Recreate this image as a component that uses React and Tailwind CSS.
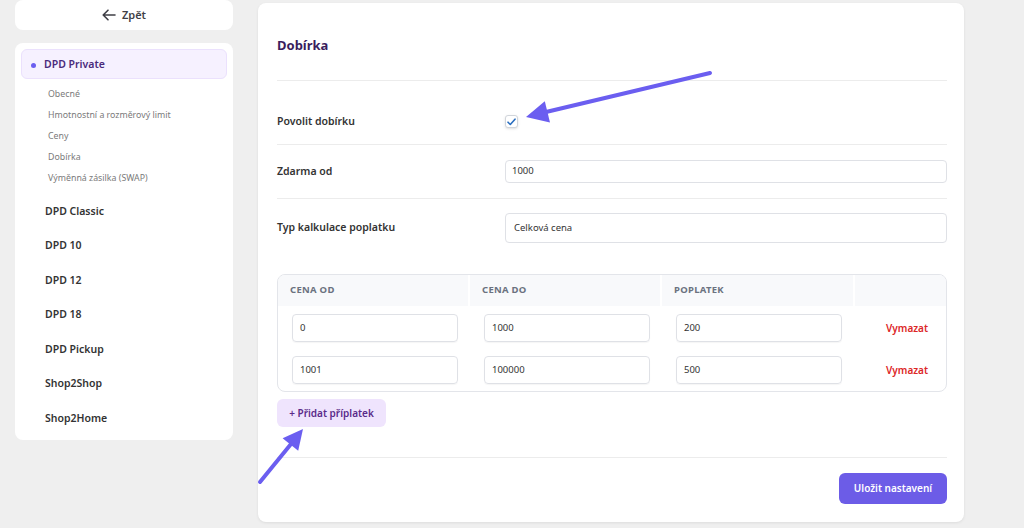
import React from "react";

const subItems = ["Obecné", "Hmotnostní a rozměrový limit", "Ceny", "Dobírka", "Výměnná zásilka (SWAP)"];
const carriers = ["DPD Classic", "DPD 10", "DPD 12", "DPD 18", "DPD Pickup", "Shop2Shop", "Shop2Home"];
const rows = [
  ["0", "1000", "200"],
  ["1001", "100000", "500"],
];

function Arrows() {
  return (
    <svg className="absolute inset-0 pointer-events-none" width="1024" height="528" viewBox="0 0 1024 528">
      <line x1="710" y1="73" x2="546" y2="112" stroke="#6b5ef0" strokeWidth="4" strokeLinecap="round" />
      <polygon points="526,117 550,122.6 544.8,101.2" fill="#6b5ef0" />
      <line x1="260" y1="482" x2="291" y2="444" stroke="#6b5ef0" strokeWidth="4" strokeLinecap="round" />
      <polygon points="303,429 298.2,450.8 282.6,438.2" fill="#6b5ef0" />
    </svg>
  );
}

export default function App() {
  return (
    <div
      className="relative w-[1024px] h-[528px] overflow-hidden bg-[#efefef] flex items-start"
      style={{ fontFamily: '"Noto Sans", "Open Sans", sans-serif' }}
    >
      {/* Left column */}
      <div className="ml-[15px] w-[218px] flex flex-col">
        <div className="h-[30px] bg-white rounded-lg flex items-center justify-center gap-[6px] text-[#3f3f46]">
          <svg width="14" height="12" viewBox="0 0 14 12" fill="none" stroke="#3f3f46" strokeWidth="1.6" strokeLinecap="round" strokeLinejoin="round">
            <path d="M13 6H1.5M6 1.2L1.2 6 6 10.8" />
          </svg>
          <span className="text-[11px] font-semibold">Zpět</span>
        </div>
        <div className="mt-[13px] h-[397px] bg-white rounded-lg p-[6px] flex flex-col">
          <div className="h-[31px] pt-[3px] rounded-md bg-[#f6f1ff] border border-[#ebe1fd] flex items-center pl-[9px]">
            <span className="w-[5px] h-[5px] rounded-full bg-[#6b5ef0]"></span>
            <span className="ml-[8px] text-[10.5px] font-semibold text-[#4a2a7c]">DPD Private</span>
          </div>
          <div className="mt-[4px] flex flex-col pl-[27px]">
            {subItems.map((s) => (
              <div key={s} className="h-[21px] pt-[4px] flex items-center text-[8.8px] text-[#7a7a7a]">{s}</div>
            ))}
          </div>
          <div className="mt-[5px] flex flex-col">
            {carriers.map((c) => (
              <div key={c} className="h-[34.5px] pt-[4px] flex items-center pl-[24px] text-[10.5px] font-semibold text-[#333]">{c}</div>
            ))}
          </div>
        </div>
      </div>

      {/* Main card */}
      <div className="ml-[25px] mt-[3px] w-[706px] h-[519px] bg-white rounded-lg shadow-[0_1px_3px_rgba(0,0,0,0.08)] pl-[19px] pr-[17px] flex flex-col">
        <div className="h-[77px] pt-[8px] flex items-center">
          <h1 className="text-[13px] font-bold text-[#3a1d5e]">Dobírka</h1>
        </div>
        <div className="border-t border-[#ececec]"></div>
        <div className="h-[63px] pt-[18px] flex items-center">
          <div className="w-[228px] text-[10.5px] font-semibold text-[#333]">Povolit dobírku</div>
          <span className="w-[13px] h-[13px] rounded-[3px] border border-[#d1d5db] bg-white flex items-center justify-center shadow-sm">
            <svg width="9" height="8" viewBox="0 0 9 8" fill="none" stroke="#2b6fc0" strokeWidth="1.6" strokeLinecap="round" strokeLinejoin="round">
              <path d="M1 4.2L3.3 6.5 8 1.2" />
            </svg>
          </span>
        </div>
        <div className="border-t border-[#ececec]"></div>
        <div className="h-[53px] flex items-center">
          <div className="w-[228px] text-[10.5px] font-semibold text-[#333]">Zdarma od</div>
          <div className="flex-1 h-[23px] rounded-[4px] border border-[#dfe1e6] flex items-center pl-[6px] text-[9.5px] text-[#333]">1000</div>
        </div>
        <div className="border-t border-[#ececec]"></div>
        <div className="py-[14px] flex items-center">
          <div className="w-[228px] text-[10.5px] font-semibold text-[#333]">Typ kalkulace poplatku</div>
          <div className="flex-1 h-[30px] rounded-[4px] border border-[#dfe1e6] flex items-center pl-[8px] text-[9.5px] text-[#333]">Celková cena</div>
        </div>

        {/* Table */}
        <div className="mt-[17px] h-[118px] rounded-lg border border-[#e3e5ea] overflow-hidden flex flex-col">
          <div className="h-[31px] bg-[#f8f9fb] flex text-[9.5px] font-bold tracking-[0.03em] text-[#6b7280]">
            <div className="w-[192px] border-r-2 border-white flex items-center pl-[12px]">CENA OD</div>
            <div className="w-[192px] border-r-2 border-white flex items-center pl-[12px]">CENA DO</div>
            <div className="w-[193px] border-r-2 border-white flex items-center pl-[12px]">POPLATEK</div>
            <div className="flex-1"></div>
          </div>
          <div className="flex flex-col pt-[1px]">
            {rows.map((r, i) => (
              <div key={i} className="h-[42px] flex items-center">
                {r.map((v, j) => (
                  <div key={j} className={j === 2 ? "w-[193px] pl-[14px]" : "w-[192px] pl-[14px]"}>
                    <div className="w-[166px] h-[28px] rounded-[4px] border border-[#dfe1e6] shadow-[0_1px_1px_rgba(0,0,0,0.04)] flex items-center pl-[7px] text-[9.5px] text-[#333]">{v}</div>
                  </div>
                ))}
                <div className="flex-1 pl-[31px] text-[10px] font-semibold text-[#dc2626]">Vymazat</div>
              </div>
            ))}
          </div>
        </div>

        <div className="mt-[7px] flex">
          <button className="w-[109px] h-[28px] rounded-md bg-[#efe4fd] text-[10px] font-semibold text-[#5a2b8a]">+ Přidat příplatek</button>
        </div>
        <div className="mt-[30px] border-t border-[#ececec]"></div>
        <div className="mt-[15px] flex justify-end">
          <button className="w-[108px] h-[31px] rounded-md bg-[#6c5ce7] text-[10px] font-semibold text-white">Uložit nastavení</button>
        </div>
      </div>

      <Arrows />
    </div>
  );
}
